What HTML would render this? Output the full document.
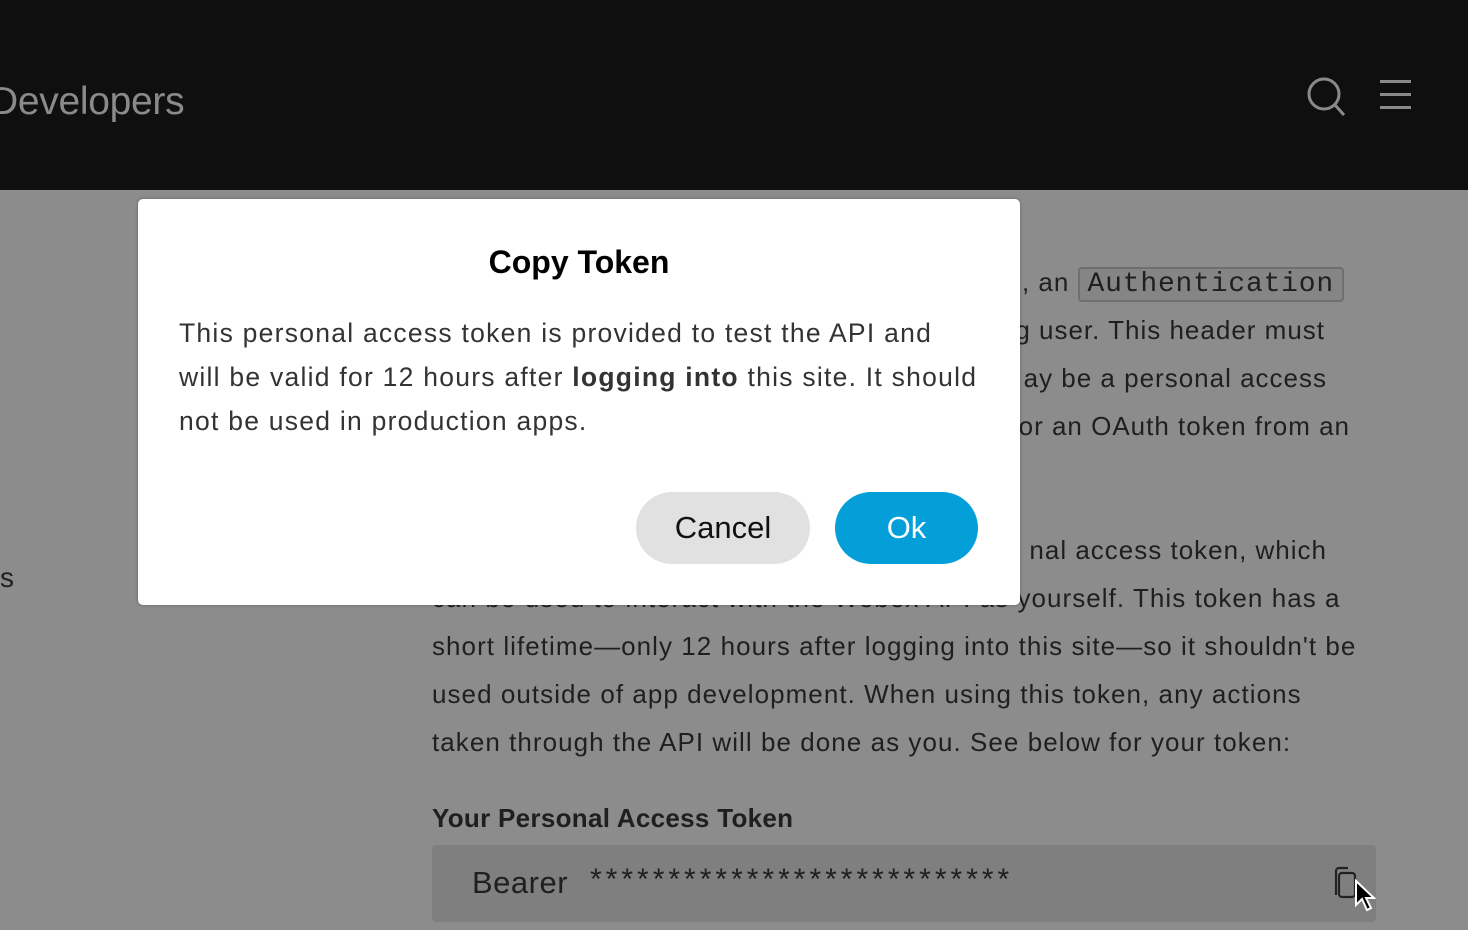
<!DOCTYPE html>
<html><head><meta charset="utf-8"><style>
*{margin:0;padding:0;box-sizing:border-box}
body{width:1468px;height:930px;overflow:hidden;background:#8c8c8c;font-family:"Liberation Sans",sans-serif;position:relative}
.hdr{position:absolute;left:0;top:0;width:1468px;height:190px;background:#0f0f0f}
.logo{position:absolute;left:-10px;top:80px;font-size:39px;color:#8a8a8a;letter-spacing:-0.3px}
.t{position:absolute;left:432px;font-size:26px;color:#1f1f1f;white-space:nowrap;letter-spacing:1.05px}
.r{position:absolute;font-size:26px;color:#1f1f1f;white-space:nowrap;letter-spacing:1px;text-align:right}
.modal{position:absolute;left:138px;top:199px;width:882px;height:406px;background:#fff;border-radius:5px;box-shadow:0 0 3px rgba(0,0,0,.3)}
.modal h2{position:absolute;left:0;width:100%;text-align:center;font-size:32px;font-weight:bold;color:#000}
.mb{position:absolute;left:41px;top:112px;font-size:26.5px;line-height:44px;color:#333;width:820px;letter-spacing:1.25px;white-space:nowrap}
.btn{position:absolute;top:293px;height:72px;border-radius:36px;font-size:31px;text-align:center;line-height:72px}
.tok{position:absolute;left:432px;top:845px;width:944px;height:77px;background:#7f7f7f;border-radius:4px}
</style></head><body>
<div class="hdr"><div class="logo">Developers</div>
<svg style="position:absolute;left:1300px;top:70px" width="50" height="50"><circle cx="24" cy="24" r="15" fill="none" stroke="#8a8a8a" stroke-width="3"/><line x1="35" y1="35" x2="44" y2="45" stroke="#8a8a8a" stroke-width="3"/></svg>
<svg style="position:absolute;left:1378px;top:78px" width="34" height="34"><rect x="2" y="2" width="31" height="3" fill="#8a8a8a"/><rect x="2" y="15" width="31" height="3" fill="#8a8a8a"/><rect x="2" y="28" width="31" height="3" fill="#8a8a8a"/></svg>
</div>
<div style="position:absolute;left:0;top:562px;font-size:28px;color:#1f1f1f">s</div>
<div class="r" style="top:267px;right:124px">I, an <span style="font-family:'Liberation Mono',monospace;font-size:28px;letter-spacing:0.8px;border:2px solid #6f6f6f;border-radius:4px;padding:0 8px;background:#858585">Authentication</span></div>
<div class="r" style="top:315px;right:143px">g user. This header must</div>
<div class="r" style="top:363px;right:141px">ay be a personal access</div>
<div class="r" style="top:411px;right:118px">or an OAuth token from an</div>
<div class="r" style="top:535px;right:141px">nal access token, which</div>
<div class="t" style="top:583px">can be used to interact with the Webex API as yourself. This token has a</div>
<div class="t" style="top:631px">short lifetime—only 12 hours after logging into this site—so it shouldn't be</div>
<div class="t" style="top:679px">used outside of app development. When using this token, any actions</div>
<div class="t" style="top:727px">taken through the API will be done as you. See below for your token:</div>
<div class="t" style="top:803px;font-weight:bold;letter-spacing:0.3px">Your Personal Access Token</div>
<div class="tok"><span style="position:absolute;left:40px;top:20px;font-size:31px;color:#1f1f1f;letter-spacing:0.5px">Bearer</span><span style="position:absolute;left:158px;top:18px;font-size:30px;letter-spacing:4px;color:#1f1f1f">***************************</span>
<svg style="position:absolute;left:900px;top:20px" width="50" height="50"><path d="M4 30V6a3 3 0 0 1 3-3h9" fill="none" stroke="#222" stroke-width="2.2"/><rect x="7" y="8" width="16" height="24" rx="3" fill="none" stroke="#222" stroke-width="2.2"/><path d="M24 16v24l6-6 5 11 4-2-5-10h8z" fill="#000" stroke="#fff" stroke-width="2"/></svg></div>
<div class="modal"><h2 style="top:45px">Copy Token</h2>
<div class="mb">This personal access token is provided to test the API and<br>will be valid for 12 hours after <b>logging into</b> this site. It should<br>not be used in production apps.</div>
<div class="btn" style="left:498px;width:174px;background:#e1e1e1;color:#111">Cancel</div>
<div class="btn" style="left:697px;width:143px;background:#049fd9;color:#fff">Ok</div>
</div>
</body></html>
